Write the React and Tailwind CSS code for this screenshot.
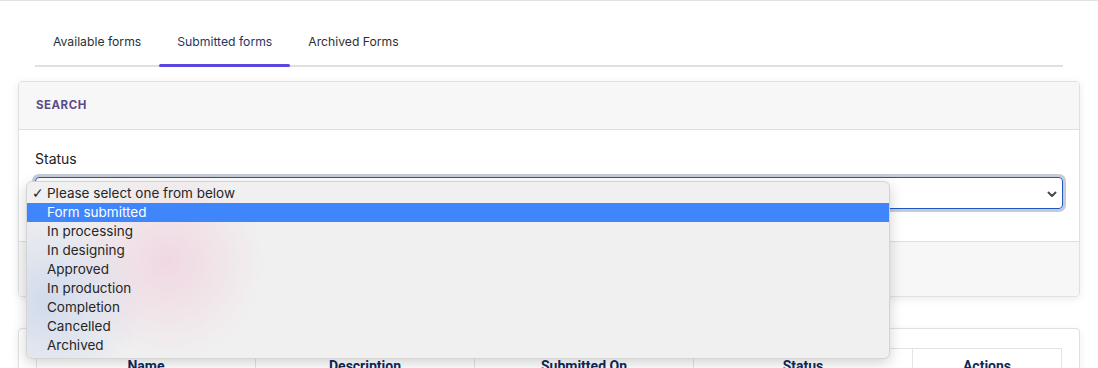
const TABS = ["Available forms", "Submitted forms", "Archived Forms"];
const OPTIONS = [
  "Form submitted",
  "In processing",
  "In designing",
  "Approved",
  "In production",
  "Completion",
  "Cancelled",
  "Archived",
];
const COLUMNS = ["Name", "Description", "Submitted On", "Status"];

function Tabs() {
  return (
    <div className="mx-[35px] flex border-b-2 border-[#dde1e6]">
      {TABS.map((tab, i) => (
        <div
          key={tab}
          className={`relative px-[18px] pb-[13px] pt-[31px] text-[12.2px] leading-5 ${i === 1 ? "text-[#1c3768]" : "text-[#2d2f33]"}`}
        >
          {tab}
          {i === 1 && <span className="absolute -bottom-[2px] left-0 right-0 h-[3px] rounded-full bg-[#5b47e0]" />}
        </div>
      ))}
    </div>
  );
}

function StatusMenu() {
  return (
    <div className="absolute left-[26px] top-[180px] w-[864px] overflow-hidden rounded-[6px] border border-[#d4d4d4] bg-[#f0f0f0] pb-[3px] pt-[2px] text-[13.5px] text-[#262626] shadow-[0_4px_14px_rgba(0,0,0,0.18)]">
      <div className="pointer-events-none absolute -left-[80px] top-[20px] h-[200px] w-[200px] rounded-full bg-[radial-gradient(circle,rgba(180,198,232,0.5),rgba(180,198,232,0)_70%)]" />
      <div className="pointer-events-none absolute left-[30px] top-[-30px] h-[220px] w-[220px] rounded-full bg-[radial-gradient(circle,rgba(240,192,212,0.5),rgba(240,192,212,0)_62%)]" />
      <div className="relative flex h-[19px] items-center">
        <span className="w-[20px] pl-[5px] font-['DejaVu_Sans',sans-serif] text-[14px] font-light">✓</span>
        <span>Please select one from below</span>
      </div>
      {OPTIONS.map((opt, i) => (
        <div
          key={opt}
          className={`relative flex h-[19px] items-center pl-[20px] ${i === 0 ? "bg-[#3f86fc] text-white" : ""}`}
        >
          {opt}
        </div>
      ))}
    </div>
  );
}

export default function App() {
  return (
    <div className="relative h-[368px] overflow-hidden border-t border-[#e2e2e2] bg-white font-['Inter',sans-serif]">
      <Tabs />

      <div className="mx-[18px] mt-[14px]">
        <div className="overflow-hidden rounded-[4px] border border-[#e0e0e0] shadow-[0_2px_8px_rgba(0,0,0,0.08)]">
          <div className="flex h-[48px] items-center border-b border-[#dedede] bg-[#f7f7f7] px-[17px]">
            <span className="text-[11.5px] font-bold tracking-[0.5px] text-[#5b4d8a]">SEARCH</span>
          </div>
          <div className="bg-white px-[16px] pb-[32px] pt-[19px]">
            <div className="text-[14px] leading-5 text-[#222]">Status</div>
            <div className="mt-[8px] flex h-[32px] items-center justify-end rounded-[4px] border border-[#1f57c3] pr-[5px] ring-[3px] ring-[#c5ccd8]">
              <svg width="10" height="7" viewBox="0 0 10 7" className="mt-[2px]">
                <path d="M1.5 1.5 L5 5 L8.5 1.5" fill="none" stroke="#45494f" strokeWidth="2" strokeLinecap="round" strokeLinejoin="round" />
              </svg>
            </div>
          </div>
          <div className="h-[55px] border-t border-[#dedede] bg-[#f7f7f7]" />
        </div>

        <div className="mt-[31px] rounded-[4px] border border-[#e0e0e0] bg-white px-[17px] pt-[19px] shadow-[0_2px_8px_rgba(0,0,0,0.06)]">
          <table className="w-full table-fixed border-collapse font-['Roboto',sans-serif]">
            <thead>
              <tr>
                {COLUMNS.map((col) => (
                  <th key={col} className="w-[219px] border border-[#e3e3e3] pb-2 pt-[7px] text-center text-[14px] font-bold text-[#0d2a5c]">
                    {col}
                  </th>
                ))}
                <th className="border border-[#e3e3e3] pb-2 pt-[7px] text-center text-[14px] font-bold text-[#0d2a5c]">
                  Actions
                </th>
              </tr>
            </thead>
          </table>
        </div>
      </div>

      <StatusMenu />
    </div>
  );
}
